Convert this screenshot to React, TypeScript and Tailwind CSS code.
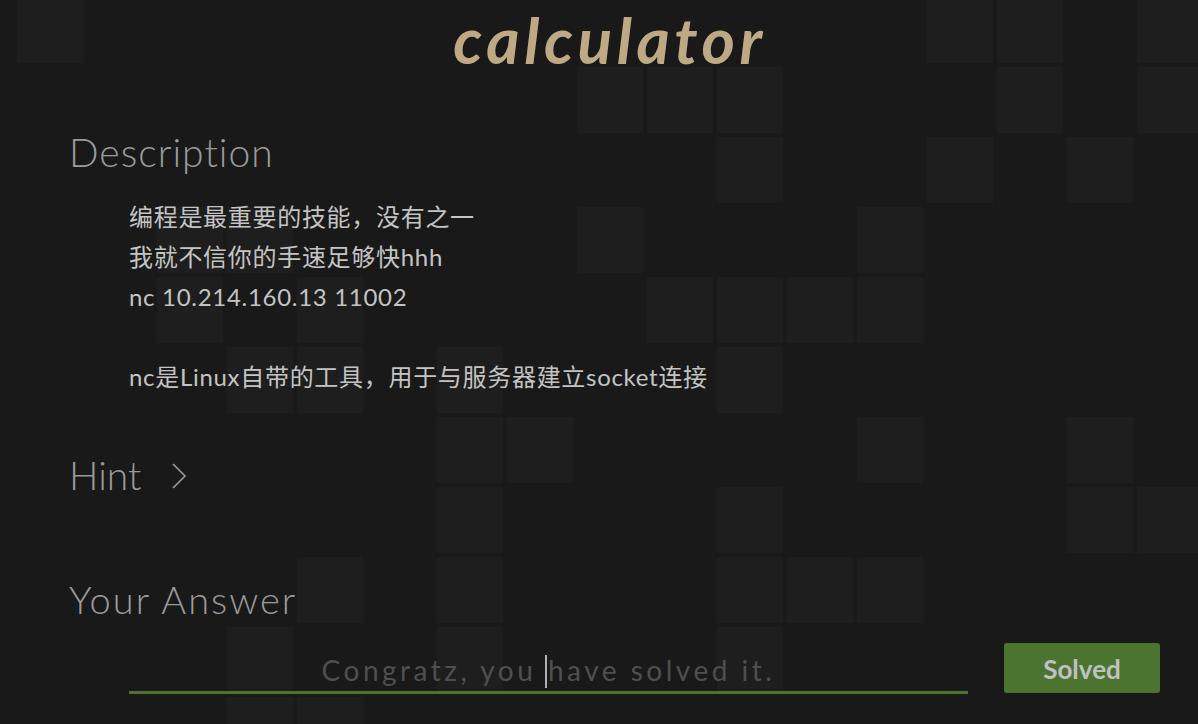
import { Fragment } from 'react';

const lit: Record<number, number[]> = {
  0: [0, 13, 14, 16],
  1: [8, 9, 10, 14, 16],
  2: [10, 13, 15],
  3: [2, 3, 8, 12],
  4: [2, 4, 9, 10, 11, 12],
  5: [3, 4, 6, 10],
  6: [6, 7, 12, 15],
  7: [6, 10, 15, 16],
  8: [4, 6, 10, 11, 12],
  9: [3, 6, 10],
  10: [3, 4],
};

const description = [
  '编程是最重要的技能，没有之一',
  '我就不信你的手速足够快hhh',
  'nc 10.214.160.13 11002',
  '',
  'nc是Linux自带的工具，用于与服务器建立socket连接',
];

function Tiles() {
  return (
    <div className="absolute inset-0 overflow-hidden">
      <div className="absolute left-[17px] top-[-3px] grid grid-cols-[repeat(17,66px)] auto-rows-[66px] gap-[4px]">
        {Array.from({ length: 11 }).map((_, r) => (
          <Fragment key={r}>
            {Array.from({ length: 17 }).map((_, c) => (
              <div key={c} className={lit[r].includes(c) ? 'bg-[#1e1e1e]' : ''} />
            ))}
          </Fragment>
        ))}
      </div>
    </div>
  );
}

export default function App() {
  return (
    <div className="relative h-[724px] w-full overflow-hidden bg-[#191919] font-['Lato','Noto_Sans_CJK_SC',sans-serif]">
      <Tiles />
      <div className="relative">
        <h1 className="pt-[8px] pl-[22px] text-center text-[64px] leading-none font-bold italic tracking-[4.5px] text-[#bfa984]">
          calculator
        </h1>

        <div className="pl-[69px] pr-[38px]">
          <h2 className="mt-[57px] text-[39px] leading-[47px] font-light tracking-[1px] text-[#9b9b9b]">Description</h2>
          <div className="mt-[21px] pl-[60px] text-[24px] leading-[40px] tracking-[0.7px] text-[#c4c4c4]">
            {description.map((line, i) => (
              <div key={i} className="h-[40px]">{line}</div>
            ))}
          </div>

          <div className="mt-[55px] flex items-center gap-[30px] text-[#9b9b9b]">
            <h2 className="text-[39px] leading-[47px] font-light">Hint</h2>
            <svg width="16" height="28" viewBox="0 0 16 28" fill="none" stroke="currentColor" strokeWidth="1.6">
              <polyline points="2,2 14,14 2,26" />
            </svg>
          </div>

          <h2 className="mt-[77px] text-[38px] leading-[46px] font-light tracking-[2px] text-[#9b9b9b]">Your Answer</h2>

          <div className="mt-[21px] flex items-end gap-[36px] pl-[60px]">
            <div className="h-[51px] w-[839px] shrink-0 border-b-[3px] border-[#4a742f] pt-[8px] text-center text-[28px] leading-[38px] tracking-[3.5px] whitespace-pre text-[#4f4f4f]">
              Congratz, you <span className="inline-block h-[33px] w-[2px] -ml-[2px] mr-[1px] align-[-7px] bg-[#b0b0b0]" />have solved it.
            </div>
            <button className="mb-[1px] h-[50px] w-[156px] shrink-0 rounded-[3px] bg-[#4a742f] pt-[3px] text-[26px] font-bold text-[#c0c0c0]">
              Solved
            </button>
          </div>
        </div>
      </div>
    </div>
  );
}
